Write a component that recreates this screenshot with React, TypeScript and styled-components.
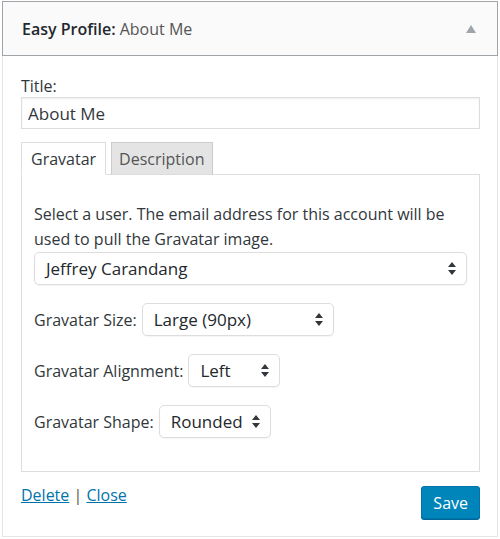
import React from "react";
import styled, { createGlobalStyle } from "styled-components";

const Global = createGlobalStyle`
  html, body {
    margin: 0;
    padding: 0;
    background: #fff;
  }
  body {
    font-family: "Open Sans", "Liberation Sans", sans-serif;
    color: #32373c;
  }
`;

const Widget = styled.div`
  width: 496px;
  margin: 1px 0 0 2px;
`;

const Header = styled.div`
  height: 53px;
  border: 1px solid #a0a5aa;
  background: #fafafa;
  display: flex;
  align-items: center;
  justify-content: space-between;
  padding: 0 21px 0 19px;
  font-size: 16px;
  color: #23282d;
`;

const HeaderTitle = styled.div`
  font-weight: 600;
  span {
    font-weight: 400;
    color: #555;
  }
`;

const Body = styled.div`
  border: 1px solid #e5e5e5;
  border-top: none;
  padding: 19px 17px 17px 18px;
`;

const FieldLabel = styled.label`
  display: block;
  font-size: 16px;
  line-height: 22px;
`;

const TextInput = styled.input`
  box-sizing: border-box;
  width: 100%;
  height: 32px;
  border: 1px solid #ddd;
  box-shadow: inset 0 1px 2px rgba(0, 0, 0, 0.07);
  padding: 0 6px;
  font-family: inherit;
  font-size: 17px;
  color: #32373c;
  outline: none;
`;

const TabBar = styled.div`
  display: flex;
  gap: 5px;
  margin-top: 13px;
  position: relative;
  z-index: 1;
`;

const Tab = styled.div<{ $active?: boolean }>`
  height: 31px;
  padding: 0 ${(p) => (p.$active ? 9 : 7)}px;
  display: flex;
  align-items: center;
  font-size: 16px;
  border: 1px solid ${(p) => (p.$active ? "#ddd" : "#ccc")};
  border-bottom: ${(p) => (p.$active ? "1px solid #fff" : "1px solid #ddd")};
  background: ${(p) => (p.$active ? "#fff" : "#e4e4e4")};
  color: ${(p) => (p.$active ? "#32373c" : "#555")};
  margin-bottom: -1px;
`;

const Panel = styled.div`
  border: 1px solid #ddd;
  padding: 27px 12px 33px 12px;
`;

const Intro = styled.p`
  margin: 0;
  font-size: 16px;
  line-height: 25px;
`;

const SelectBox = styled.div<{ $width?: number }>`
  box-sizing: border-box;
  height: 33px;
  width: ${(p) => (p.$width ? `${p.$width}px` : "100%")};
  border: 1px solid #ddd;
  border-radius: 5px;
  background: #fff;
  box-shadow: 0 1px 1px rgba(0, 0, 0, 0.04);
  display: flex;
  align-items: center;
  justify-content: space-between;
  padding: 0 10px 0 11px;
  font-size: 17px;
  color: #23282d;
`;

const Row = styled.div`
  display: flex;
  align-items: center;
  gap: 5px;
  margin-top: 18px;
  font-size: 16px;
`;

const Footer = styled.div`
  display: flex;
  align-items: flex-start;
  justify-content: space-between;
  margin-top: 14px;
  font-size: 16px;
`;

const Links = styled.div`
  color: #555;
  line-height: 19px;
  a {
    color: #0073aa;
    text-decoration: underline;
  }
`;

const SaveButton = styled.button`
  height: 33px;
  padding: 0 11px;
  border: 1px solid #0073aa;
  border-radius: 3px;
  background: #0085ba;
  box-shadow: 0 1px 0 #006799;
  color: #fff;
  font-family: inherit;
  font-size: 16px;
  cursor: pointer;
`;

const Arrows = () => (
  <svg width="8" height="13" viewBox="0 0 8 13">
    <path d="M4 0 L8 5 L0 5 Z M0 8 L8 8 L4 13 Z" fill="#32373c" />
  </svg>
);

const Select = ({ value, width }: { value: string; width?: number }) => (
  <SelectBox $width={width}>
    <span>{value}</span>
    <Arrows />
  </SelectBox>
);

export default function App() {
  return (
    <>
      <Global />
      <Widget>
        <Header>
          <HeaderTitle>
            Easy Profile: <span>About Me</span>
          </HeaderTitle>
          <svg width="10" height="8" viewBox="0 0 10 8">
            <path d="M5 0 L10 8 L0 8 Z" fill="#a0a5aa" />
          </svg>
        </Header>
        <Body>
          <FieldLabel>Title:</FieldLabel>
          <TextInput defaultValue="About Me" />
          <TabBar>
            <Tab $active>Gravatar</Tab>
            <Tab>Description</Tab>
          </TabBar>
          <Panel>
            <Intro>
              Select a user. The email address for this account will be used to
              pull the Gravatar image.
            </Intro>
            <Select value="Jeffrey Carandang" />
            <Row>
              Gravatar Size: <Select value="Large (90px)" width={192} />
            </Row>
            <Row>
              Gravatar Alignment: <Select value="Left" width={92} />
            </Row>
            <Row>
              Gravatar Shape: <Select value="Rounded" width={112} />
            </Row>
          </Panel>
          <Footer>
            <Links>
              <a href="#">Delete</a> | <a href="#">Close</a>
            </Links>
            <SaveButton>Save</SaveButton>
          </Footer>
        </Body>
      </Widget>
    </>
  );
}
